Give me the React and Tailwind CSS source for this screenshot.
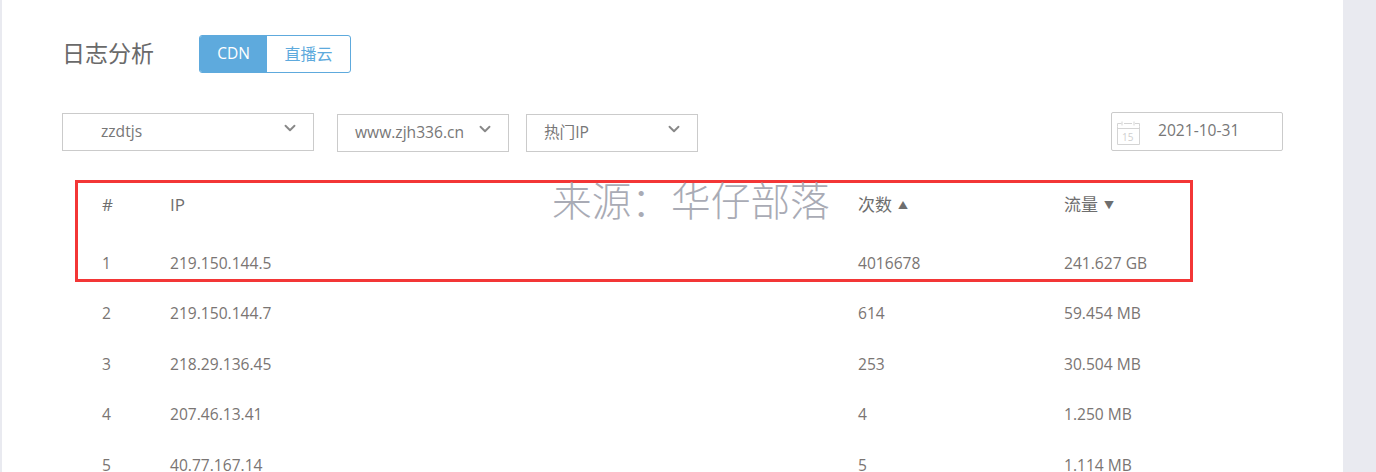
import { ChevronDown } from 'lucide-react';

const rows = [
  ['1', '219.150.144.5', '4016678', '241.627 GB'],
  ['2', '219.150.144.7', '614', '59.454 MB'],
  ['3', '218.29.136.45', '253', '30.504 MB'],
  ['4', '207.46.13.41', '4', '1.250 MB'],
  ['5', '40.77.167.14', '5', '1.114 MB'],
];

const font = 'font-["Open_Sans","Noto_Sans_CJK_SC",sans-serif]';

const Select = ({ label, width, pad, margin }) => (
  <div className={`relative h-[38px] border border-[#cbcbcb] flex items-center text-[15.6px] text-[#777] ${width} ${pad} ${margin}`}>
    <span className="-mt-px">{label}</span>
    <ChevronDown size={18} strokeWidth={2.5} className="absolute right-[14px] top-[5px] text-[#888]" />
  </div>
);

const App = () => {
  return (
    <div className={`relative h-[472px] w-[1376px] overflow-hidden bg-[#e9eaf0] pl-[2px] pr-[33px] ${font}`}>
      <div className="relative h-full bg-white pl-[60px] text-[#7a7573]">
        <div className="flex h-[113px] items-start pt-[35px]">
          <h1 className="w-[137px] text-[23px] leading-[36px] text-[#6a6a6a]">日志分析</h1>
          <div className="flex h-[38px] w-[152px] overflow-hidden rounded-[3px] border border-[#5eaadd] text-[16px]">
            <div className="flex w-[67px] items-center justify-center bg-[#5eaadd] text-[15.5px] font-medium text-white">CDN</div>
            <div className="flex flex-1 items-center justify-center text-[#5eaadd]">直播云</div>
          </div>
        </div>

        <div className="flex items-start">
          <Select label="zzdtjs" width="w-[252px]" pad="pl-[38px]" margin="mr-[23px]" />
          <Select label="www.zjh336.cn" width="w-[172px]" pad="pl-[17px]" margin="mt-px mr-[17px]" />
          <Select label="热门IP" width="w-[172px]" pad="pl-[17px]" margin="mt-px mr-[413px]" />
          <div className="flex h-[39px] w-[172px] -mt-px items-center rounded-[2px] border border-[#cbcbcb] pl-[4px] text-[15.6px] text-[#777]">
            <svg width="24" height="24" viewBox="0 0 24 24" fill="none" stroke="#d4d4d4" strokeWidth="1" className="mt-[3px] shrink-0">
              <path d="M1.5 5.5v18h22v-18" />
              <path d="M1.5 2.5h4M8 2.5h8M19 2.5h4.5M1.5 2.5v3M23.5 2.5v3M6 .5v4M18 .5v4M1.5 7.5h22" />
              <text x="6" y="20" fontSize="10" fill="#cfcfcf" stroke="none">15</text>
            </svg>
            <span className="ml-[18px] -mt-px">2021-10-31</span>
          </div>
        </div>

        <div className="mt-[36px] text-[15.6px]">
          <div className="grid h-[34px] grid-cols-[68px_688px_206px_1fr] items-center pl-[40px] text-[17px] text-[#6e6e6e]">
            <span>#</span>
            <span>IP</span>
            <span className="flex items-center gap-[6px]">次数<span className="text-[10px]">▲</span></span>
            <span className="flex items-center gap-[6px]">流量<span className="text-[10px]">▼</span></span>
          </div>
          <div className="mt-[16px]">
            {rows.map(r => (
              <div key={r[0]} className="grid h-[50.6px] grid-cols-[68px_688px_206px_1fr] items-center pl-[40px]">
                <span>{r[0]}</span>
                <span>{r[1]}</span>
                <span>{r[2]}</span>
                <span>{r[3]}</span>
              </div>
            ))}
          </div>
        </div>
      </div>

      {/* annotation pasted over the screenshot */}
      <div className="absolute left-[75px] top-[180px] h-[102px] w-[1118px] border-[3px] border-[#f33636]" />
      <div className="absolute left-[552px] top-[176px] whitespace-nowrap text-[39.7px] font-light leading-[50px] text-[#a9abb5]">来源：华仔部落</div>
    </div>
  );
};

export default App;
